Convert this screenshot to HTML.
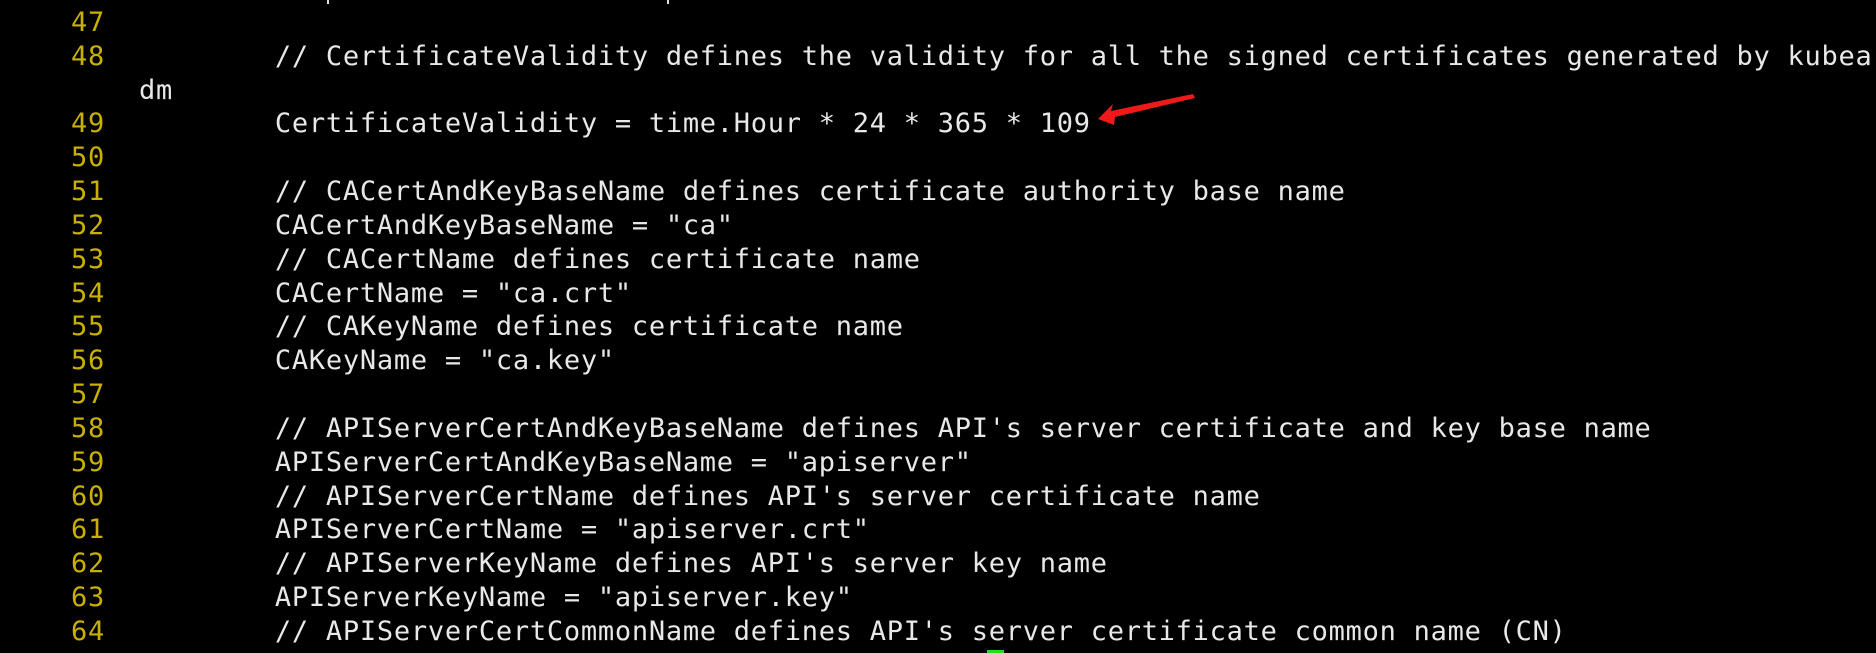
<!DOCTYPE html>
<html><head><meta charset="utf-8"><style>
html,body{margin:0;padding:0;background:#000;width:1876px;height:653px;overflow:hidden;position:relative}
.r{position:absolute;left:3px;height:34px;line-height:34px;white-space:pre;font-family:"DejaVu Sans Mono","Liberation Mono",monospace;font-size:27px;letter-spacing:0.74px;color:#e8e8e8}
.n{color:#c8b000}
</style></head><body>
<div style="position:absolute;left:327px;top:0;width:2px;height:4px;background:#ddd"></div>
<div style="position:absolute;left:667px;top:0;width:2px;height:4px;background:#ddd"></div>
<div class="r" style="top:6px"><span class="n">    47 </span></div>
<div class="r" style="top:40px"><span class="n">    48 </span>         // CertificateValidity defines the validity for all the signed certificates generated by kubea</div>
<div class="r" style="top:74px">        dm</div>
<div class="r" style="top:107px"><span class="n">    49 </span>         CertificateValidity = time.Hour * 24 * 365 * 109</div>
<div class="r" style="top:141px"><span class="n">    50 </span></div>
<div class="r" style="top:175px"><span class="n">    51 </span>         // CACertAndKeyBaseName defines certificate authority base name</div>
<div class="r" style="top:209px"><span class="n">    52 </span>         CACertAndKeyBaseName = "ca"</div>
<div class="r" style="top:243px"><span class="n">    53 </span>         // CACertName defines certificate name</div>
<div class="r" style="top:277px"><span class="n">    54 </span>         CACertName = "ca.crt"</div>
<div class="r" style="top:310px"><span class="n">    55 </span>         // CAKeyName defines certificate name</div>
<div class="r" style="top:344px"><span class="n">    56 </span>         CAKeyName = "ca.key"</div>
<div class="r" style="top:378px"><span class="n">    57 </span></div>
<div class="r" style="top:412px"><span class="n">    58 </span>         // APIServerCertAndKeyBaseName defines API's server certificate and key base name</div>
<div class="r" style="top:446px"><span class="n">    59 </span>         APIServerCertAndKeyBaseName = "apiserver"</div>
<div class="r" style="top:480px"><span class="n">    60 </span>         // APIServerCertName defines API's server certificate name</div>
<div class="r" style="top:513px"><span class="n">    61 </span>         APIServerCertName = "apiserver.crt"</div>
<div class="r" style="top:547px"><span class="n">    62 </span>         // APIServerKeyName defines API's server key name</div>
<div class="r" style="top:581px"><span class="n">    63 </span>         APIServerKeyName = "apiserver.key"</div>
<div class="r" style="top:615px"><span class="n">    64 </span>         // APIServerCertCommonName defines API's server certificate common name (CN)</div>
<div style="position:absolute;left:987px;top:650px;width:17px;height:3px;background:#22dd22"></div>
<svg style="position:absolute;left:0;top:0" width="1876" height="653"><polygon points="1098,119 1113,104 1111,111 1193,94 1195,98 1115,117 1114,125" fill="#ee1a1a"/></svg>
</body></html>
